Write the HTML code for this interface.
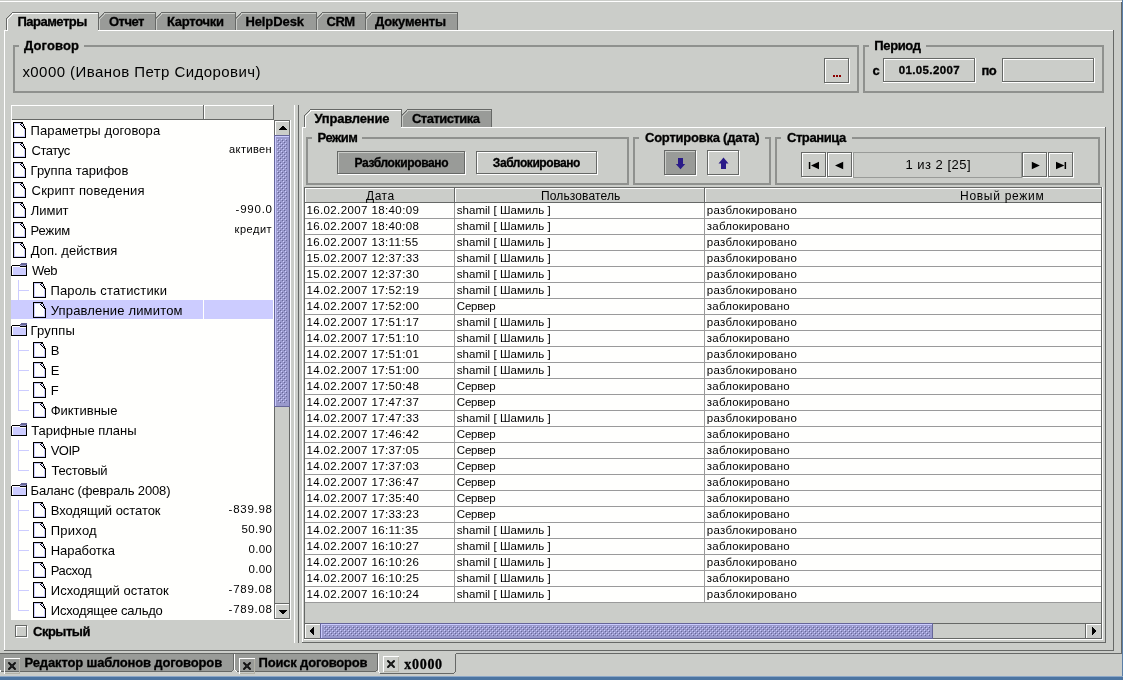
<!DOCTYPE html>
<html><head><meta charset="utf-8"><title>x0000</title>
<style>
html,body{margin:0;padding:0;background:#cbcdc9;overflow:hidden}
#w{will-change:transform;position:relative;width:1123px;height:680px;background:#cbcdc9;overflow:hidden;font-family:"Liberation Sans",sans-serif;color:#000}
#g{position:absolute;left:0;top:0}
.t{position:absolute;white-space:pre;font-family:"Liberation Sans",sans-serif}
</style></head><body><div id="w">
<svg id="g" width="1123" height="680" viewBox="0 0 1123 680" shape-rendering="crispEdges">
<defs><pattern id="bm" x="0" y="0" width="4" height="4" patternUnits="userSpaceOnUse">
<rect x="0" y="2" width="1" height="1" fill="#ccccff"/><rect x="1" y="3" width="1" height="1" fill="#666699"/>
<rect x="2" y="0" width="1" height="1" fill="#ccccff"/><rect x="3" y="1" width="1" height="1" fill="#666699"/></pattern>
<pattern id="bmv" x="0" y="0" width="4" height="4" patternUnits="userSpaceOnUse">
<rect x="1" y="3" width="1" height="1" fill="#ccccff"/><rect x="2" y="0" width="1" height="1" fill="#666699"/>
<rect x="3" y="1" width="1" height="1" fill="#ccccff"/><rect x="0" y="2" width="1" height="1" fill="#666699"/></pattern></defs>
<rect x="0" y="1" width="1122" height="1" fill="#ffffff"/>
<rect x="1121" y="2" width="1" height="652" fill="#666866"/>
<rect x="1122" y="0" width="1" height="680" fill="#5a7fa8"/>
<rect x="0" y="653" width="1122" height="1" fill="#666866"/>
<rect x="0" y="676" width="1123" height="1" fill="#8ba6c6"/>
<rect x="0" y="677" width="1123" height="3" fill="#4c74a1"/>
<rect x="4" y="30" width="1109" height="1" fill="#ffffff"/>
<rect x="4" y="30" width="1" height="621" fill="#ffffff"/>
<rect x="1113" y="30" width="1" height="621" fill="#666866"/>
<rect x="4" y="650" width="1110" height="1" fill="#666866"/>
<polygon points="365,30 365,18 371,12 458,12 458,30" fill="#999b98"/>
<rect x="365" y="18" width="1" height="12" fill="#666866"/>
<rect x="366" y="17" width="1" height="1" fill="#666866"/>
<rect x="367" y="16" width="1" height="1" fill="#666866"/>
<rect x="368" y="15" width="1" height="1" fill="#666866"/>
<rect x="369" y="14" width="1" height="1" fill="#666866"/>
<rect x="370" y="13" width="1" height="1" fill="#666866"/>
<rect x="371" y="12" width="87" height="1" fill="#666866"/>
<rect x="457" y="12" width="1" height="18" fill="#666866"/>
<rect x="366" y="19" width="1" height="11" fill="#cbcdc9"/>
<rect x="367" y="18" width="1" height="1" fill="#cbcdc9"/>
<rect x="368" y="17" width="1" height="1" fill="#cbcdc9"/>
<rect x="369" y="16" width="1" height="1" fill="#cbcdc9"/>
<rect x="370" y="15" width="1" height="1" fill="#cbcdc9"/>
<rect x="371" y="14" width="1" height="1" fill="#cbcdc9"/>
<rect x="371" y="13" width="86" height="1" fill="#cbcdc9"/>
<polygon points="316,30 316,18 322,12 366,12 366,30" fill="#999b98"/>
<rect x="316" y="18" width="1" height="12" fill="#666866"/>
<rect x="317" y="17" width="1" height="1" fill="#666866"/>
<rect x="318" y="16" width="1" height="1" fill="#666866"/>
<rect x="319" y="15" width="1" height="1" fill="#666866"/>
<rect x="320" y="14" width="1" height="1" fill="#666866"/>
<rect x="321" y="13" width="1" height="1" fill="#666866"/>
<rect x="322" y="12" width="44" height="1" fill="#666866"/>
<rect x="365" y="12" width="1" height="18" fill="#666866"/>
<rect x="317" y="19" width="1" height="11" fill="#cbcdc9"/>
<rect x="318" y="18" width="1" height="1" fill="#cbcdc9"/>
<rect x="319" y="17" width="1" height="1" fill="#cbcdc9"/>
<rect x="320" y="16" width="1" height="1" fill="#cbcdc9"/>
<rect x="321" y="15" width="1" height="1" fill="#cbcdc9"/>
<rect x="322" y="14" width="1" height="1" fill="#cbcdc9"/>
<rect x="322" y="13" width="43" height="1" fill="#cbcdc9"/>
<polygon points="235,30 235,18 241,12 317,12 317,30" fill="#999b98"/>
<rect x="235" y="18" width="1" height="12" fill="#666866"/>
<rect x="236" y="17" width="1" height="1" fill="#666866"/>
<rect x="237" y="16" width="1" height="1" fill="#666866"/>
<rect x="238" y="15" width="1" height="1" fill="#666866"/>
<rect x="239" y="14" width="1" height="1" fill="#666866"/>
<rect x="240" y="13" width="1" height="1" fill="#666866"/>
<rect x="241" y="12" width="76" height="1" fill="#666866"/>
<rect x="316" y="12" width="1" height="18" fill="#666866"/>
<rect x="236" y="19" width="1" height="11" fill="#cbcdc9"/>
<rect x="237" y="18" width="1" height="1" fill="#cbcdc9"/>
<rect x="238" y="17" width="1" height="1" fill="#cbcdc9"/>
<rect x="239" y="16" width="1" height="1" fill="#cbcdc9"/>
<rect x="240" y="15" width="1" height="1" fill="#cbcdc9"/>
<rect x="241" y="14" width="1" height="1" fill="#cbcdc9"/>
<rect x="241" y="13" width="75" height="1" fill="#cbcdc9"/>
<polygon points="155,30 155,18 161,12 236,12 236,30" fill="#999b98"/>
<rect x="155" y="18" width="1" height="12" fill="#666866"/>
<rect x="156" y="17" width="1" height="1" fill="#666866"/>
<rect x="157" y="16" width="1" height="1" fill="#666866"/>
<rect x="158" y="15" width="1" height="1" fill="#666866"/>
<rect x="159" y="14" width="1" height="1" fill="#666866"/>
<rect x="160" y="13" width="1" height="1" fill="#666866"/>
<rect x="161" y="12" width="75" height="1" fill="#666866"/>
<rect x="235" y="12" width="1" height="18" fill="#666866"/>
<rect x="156" y="19" width="1" height="11" fill="#cbcdc9"/>
<rect x="157" y="18" width="1" height="1" fill="#cbcdc9"/>
<rect x="158" y="17" width="1" height="1" fill="#cbcdc9"/>
<rect x="159" y="16" width="1" height="1" fill="#cbcdc9"/>
<rect x="160" y="15" width="1" height="1" fill="#cbcdc9"/>
<rect x="161" y="14" width="1" height="1" fill="#cbcdc9"/>
<rect x="161" y="13" width="74" height="1" fill="#cbcdc9"/>
<polygon points="98,30 98,18 104,12 156,12 156,30" fill="#999b98"/>
<rect x="98" y="18" width="1" height="12" fill="#666866"/>
<rect x="99" y="17" width="1" height="1" fill="#666866"/>
<rect x="100" y="16" width="1" height="1" fill="#666866"/>
<rect x="101" y="15" width="1" height="1" fill="#666866"/>
<rect x="102" y="14" width="1" height="1" fill="#666866"/>
<rect x="103" y="13" width="1" height="1" fill="#666866"/>
<rect x="104" y="12" width="52" height="1" fill="#666866"/>
<rect x="155" y="12" width="1" height="18" fill="#666866"/>
<rect x="99" y="19" width="1" height="11" fill="#cbcdc9"/>
<rect x="100" y="18" width="1" height="1" fill="#cbcdc9"/>
<rect x="101" y="17" width="1" height="1" fill="#cbcdc9"/>
<rect x="102" y="16" width="1" height="1" fill="#cbcdc9"/>
<rect x="103" y="15" width="1" height="1" fill="#cbcdc9"/>
<rect x="104" y="14" width="1" height="1" fill="#cbcdc9"/>
<rect x="104" y="13" width="51" height="1" fill="#cbcdc9"/>
<polygon points="6,30 6,18 12,12 99,12 99,30" fill="#cbcdc9"/>
<rect x="6" y="18" width="1" height="12" fill="#666866"/>
<rect x="7" y="17" width="1" height="1" fill="#666866"/>
<rect x="8" y="16" width="1" height="1" fill="#666866"/>
<rect x="9" y="15" width="1" height="1" fill="#666866"/>
<rect x="10" y="14" width="1" height="1" fill="#666866"/>
<rect x="11" y="13" width="1" height="1" fill="#666866"/>
<rect x="12" y="12" width="87" height="1" fill="#666866"/>
<rect x="98" y="12" width="1" height="18" fill="#666866"/>
<rect x="7" y="19" width="1" height="11" fill="#ffffff"/>
<rect x="8" y="18" width="1" height="1" fill="#ffffff"/>
<rect x="9" y="17" width="1" height="1" fill="#ffffff"/>
<rect x="10" y="16" width="1" height="1" fill="#ffffff"/>
<rect x="11" y="15" width="1" height="1" fill="#ffffff"/>
<rect x="12" y="14" width="1" height="1" fill="#ffffff"/>
<rect x="12" y="13" width="86" height="1" fill="#ffffff"/>
<rect x="8" y="30" width="90" height="1" fill="#cbcdc9"/>
<rect x="7" y="30" width="1" height="1" fill="#ffffff"/>
<rect x="13" y="45" width="6" height="2" fill="#8f918e"/>
<rect x="84" y="45" width="775" height="2" fill="#8f918e"/>
<rect x="13" y="91" width="846" height="2" fill="#8f918e"/>
<rect x="13" y="45" width="2" height="48" fill="#8f918e"/>
<rect x="857" y="45" width="2" height="48" fill="#8f918e"/>
<rect x="863" y="45" width="6" height="2" fill="#8f918e"/>
<rect x="926" y="45" width="178" height="2" fill="#8f918e"/>
<rect x="863" y="91" width="241" height="2" fill="#8f918e"/>
<rect x="863" y="45" width="2" height="48" fill="#8f918e"/>
<rect x="1102" y="45" width="2" height="48" fill="#8f918e"/>
<rect x="824" y="58" width="25" height="1" fill="#666866"/>
<rect x="824" y="58" width="1" height="25" fill="#666866"/>
<rect x="824" y="82" width="25" height="1" fill="#666866"/>
<rect x="848" y="58" width="1" height="25" fill="#666866"/>
<rect x="825" y="59" width="23" height="1" fill="#ffffff"/>
<rect x="825" y="59" width="1" height="23" fill="#ffffff"/>
<rect x="825" y="83" width="25" height="1" fill="#ffffff"/>
<rect x="849" y="59" width="1" height="25" fill="#ffffff"/>
<rect x="833" y="75" width="2" height="2" fill="#8b0000"/>
<rect x="836" y="75" width="2" height="2" fill="#8b0000"/>
<rect x="839" y="75" width="2" height="2" fill="#8b0000"/>
<rect x="883" y="58" width="92" height="1" fill="#666866"/>
<rect x="883" y="58" width="1" height="24" fill="#666866"/>
<rect x="883" y="81" width="92" height="1" fill="#666866"/>
<rect x="974" y="58" width="1" height="24" fill="#666866"/>
<rect x="884" y="59" width="90" height="1" fill="#ffffff"/>
<rect x="884" y="59" width="1" height="22" fill="#ffffff"/>
<rect x="883" y="82" width="93" height="1" fill="#ffffff"/>
<rect x="975" y="58" width="1" height="25" fill="#ffffff"/>
<rect x="1002" y="58" width="92" height="1" fill="#666866"/>
<rect x="1002" y="58" width="1" height="24" fill="#666866"/>
<rect x="1002" y="81" width="92" height="1" fill="#666866"/>
<rect x="1093" y="58" width="1" height="24" fill="#666866"/>
<rect x="1003" y="59" width="90" height="1" fill="#ffffff"/>
<rect x="1003" y="59" width="1" height="22" fill="#ffffff"/>
<rect x="1002" y="82" width="93" height="1" fill="#ffffff"/>
<rect x="1094" y="58" width="1" height="25" fill="#ffffff"/>
<rect x="11" y="105" width="263" height="15" fill="#cbcdc9"/>
<rect x="11" y="105" width="263" height="1" fill="#ffffff"/>
<rect x="11" y="119" width="263" height="1" fill="#666866"/>
<rect x="11" y="105" width="1" height="15" fill="#ffffff"/>
<rect x="203" y="105" width="1" height="15" fill="#666866"/>
<rect x="204" y="106" width="1" height="13" fill="#ffffff"/>
<rect x="273" y="105" width="1" height="15" fill="#666866"/>
<rect x="11" y="120" width="263" height="500" fill="#fffffd"/>
<rect x="15" y="124" width="9" height="12" fill="#ffffff"/>
<rect x="13" y="122" width="1" height="16" fill="#000000"/>
<rect x="13" y="122" width="10" height="1" fill="#000000"/>
<rect x="13" y="137" width="13" height="1" fill="#000000"/>
<rect x="25" y="128" width="1" height="10" fill="#000000"/>
<rect x="20" y="124" width="1" height="1" fill="#000000"/>
<rect x="21" y="125" width="1" height="1" fill="#000000"/>
<rect x="22" y="126" width="1" height="1" fill="#000000"/>
<rect x="23" y="127" width="1" height="1" fill="#000000"/>
<rect x="24" y="128" width="1" height="1" fill="#000000"/>
<rect x="21" y="123" width="2" height="1" fill="#000000"/>
<rect x="23" y="124" width="1" height="2" fill="#000000"/>
<rect x="24" y="126" width="1" height="2" fill="#000000"/>
<rect x="14" y="123" width="1" height="14" fill="#ccccff"/>
<rect x="14" y="123" width="7" height="1" fill="#ccccff"/>
<rect x="24" y="129" width="1" height="8" fill="#ccccff"/>
<rect x="21" y="124" width="1" height="1" fill="#ccccff"/>
<rect x="22" y="125" width="1" height="1" fill="#ccccff"/>
<rect x="23" y="126" width="1" height="1" fill="#ccccff"/>
<rect x="14" y="136" width="11" height="1" fill="#ccccff"/>
<rect x="15" y="144" width="9" height="12" fill="#ffffff"/>
<rect x="13" y="142" width="1" height="16" fill="#000000"/>
<rect x="13" y="142" width="10" height="1" fill="#000000"/>
<rect x="13" y="157" width="13" height="1" fill="#000000"/>
<rect x="25" y="148" width="1" height="10" fill="#000000"/>
<rect x="20" y="144" width="1" height="1" fill="#000000"/>
<rect x="21" y="145" width="1" height="1" fill="#000000"/>
<rect x="22" y="146" width="1" height="1" fill="#000000"/>
<rect x="23" y="147" width="1" height="1" fill="#000000"/>
<rect x="24" y="148" width="1" height="1" fill="#000000"/>
<rect x="21" y="143" width="2" height="1" fill="#000000"/>
<rect x="23" y="144" width="1" height="2" fill="#000000"/>
<rect x="24" y="146" width="1" height="2" fill="#000000"/>
<rect x="14" y="143" width="1" height="14" fill="#ccccff"/>
<rect x="14" y="143" width="7" height="1" fill="#ccccff"/>
<rect x="24" y="149" width="1" height="8" fill="#ccccff"/>
<rect x="21" y="144" width="1" height="1" fill="#ccccff"/>
<rect x="22" y="145" width="1" height="1" fill="#ccccff"/>
<rect x="23" y="146" width="1" height="1" fill="#ccccff"/>
<rect x="14" y="156" width="11" height="1" fill="#ccccff"/>
<rect x="15" y="164" width="9" height="12" fill="#ffffff"/>
<rect x="13" y="162" width="1" height="16" fill="#000000"/>
<rect x="13" y="162" width="10" height="1" fill="#000000"/>
<rect x="13" y="177" width="13" height="1" fill="#000000"/>
<rect x="25" y="168" width="1" height="10" fill="#000000"/>
<rect x="20" y="164" width="1" height="1" fill="#000000"/>
<rect x="21" y="165" width="1" height="1" fill="#000000"/>
<rect x="22" y="166" width="1" height="1" fill="#000000"/>
<rect x="23" y="167" width="1" height="1" fill="#000000"/>
<rect x="24" y="168" width="1" height="1" fill="#000000"/>
<rect x="21" y="163" width="2" height="1" fill="#000000"/>
<rect x="23" y="164" width="1" height="2" fill="#000000"/>
<rect x="24" y="166" width="1" height="2" fill="#000000"/>
<rect x="14" y="163" width="1" height="14" fill="#ccccff"/>
<rect x="14" y="163" width="7" height="1" fill="#ccccff"/>
<rect x="24" y="169" width="1" height="8" fill="#ccccff"/>
<rect x="21" y="164" width="1" height="1" fill="#ccccff"/>
<rect x="22" y="165" width="1" height="1" fill="#ccccff"/>
<rect x="23" y="166" width="1" height="1" fill="#ccccff"/>
<rect x="14" y="176" width="11" height="1" fill="#ccccff"/>
<rect x="15" y="184" width="9" height="12" fill="#ffffff"/>
<rect x="13" y="182" width="1" height="16" fill="#000000"/>
<rect x="13" y="182" width="10" height="1" fill="#000000"/>
<rect x="13" y="197" width="13" height="1" fill="#000000"/>
<rect x="25" y="188" width="1" height="10" fill="#000000"/>
<rect x="20" y="184" width="1" height="1" fill="#000000"/>
<rect x="21" y="185" width="1" height="1" fill="#000000"/>
<rect x="22" y="186" width="1" height="1" fill="#000000"/>
<rect x="23" y="187" width="1" height="1" fill="#000000"/>
<rect x="24" y="188" width="1" height="1" fill="#000000"/>
<rect x="21" y="183" width="2" height="1" fill="#000000"/>
<rect x="23" y="184" width="1" height="2" fill="#000000"/>
<rect x="24" y="186" width="1" height="2" fill="#000000"/>
<rect x="14" y="183" width="1" height="14" fill="#ccccff"/>
<rect x="14" y="183" width="7" height="1" fill="#ccccff"/>
<rect x="24" y="189" width="1" height="8" fill="#ccccff"/>
<rect x="21" y="184" width="1" height="1" fill="#ccccff"/>
<rect x="22" y="185" width="1" height="1" fill="#ccccff"/>
<rect x="23" y="186" width="1" height="1" fill="#ccccff"/>
<rect x="14" y="196" width="11" height="1" fill="#ccccff"/>
<rect x="15" y="204" width="9" height="12" fill="#ffffff"/>
<rect x="13" y="202" width="1" height="16" fill="#000000"/>
<rect x="13" y="202" width="10" height="1" fill="#000000"/>
<rect x="13" y="217" width="13" height="1" fill="#000000"/>
<rect x="25" y="208" width="1" height="10" fill="#000000"/>
<rect x="20" y="204" width="1" height="1" fill="#000000"/>
<rect x="21" y="205" width="1" height="1" fill="#000000"/>
<rect x="22" y="206" width="1" height="1" fill="#000000"/>
<rect x="23" y="207" width="1" height="1" fill="#000000"/>
<rect x="24" y="208" width="1" height="1" fill="#000000"/>
<rect x="21" y="203" width="2" height="1" fill="#000000"/>
<rect x="23" y="204" width="1" height="2" fill="#000000"/>
<rect x="24" y="206" width="1" height="2" fill="#000000"/>
<rect x="14" y="203" width="1" height="14" fill="#ccccff"/>
<rect x="14" y="203" width="7" height="1" fill="#ccccff"/>
<rect x="24" y="209" width="1" height="8" fill="#ccccff"/>
<rect x="21" y="204" width="1" height="1" fill="#ccccff"/>
<rect x="22" y="205" width="1" height="1" fill="#ccccff"/>
<rect x="23" y="206" width="1" height="1" fill="#ccccff"/>
<rect x="14" y="216" width="11" height="1" fill="#ccccff"/>
<rect x="15" y="224" width="9" height="12" fill="#ffffff"/>
<rect x="13" y="222" width="1" height="16" fill="#000000"/>
<rect x="13" y="222" width="10" height="1" fill="#000000"/>
<rect x="13" y="237" width="13" height="1" fill="#000000"/>
<rect x="25" y="228" width="1" height="10" fill="#000000"/>
<rect x="20" y="224" width="1" height="1" fill="#000000"/>
<rect x="21" y="225" width="1" height="1" fill="#000000"/>
<rect x="22" y="226" width="1" height="1" fill="#000000"/>
<rect x="23" y="227" width="1" height="1" fill="#000000"/>
<rect x="24" y="228" width="1" height="1" fill="#000000"/>
<rect x="21" y="223" width="2" height="1" fill="#000000"/>
<rect x="23" y="224" width="1" height="2" fill="#000000"/>
<rect x="24" y="226" width="1" height="2" fill="#000000"/>
<rect x="14" y="223" width="1" height="14" fill="#ccccff"/>
<rect x="14" y="223" width="7" height="1" fill="#ccccff"/>
<rect x="24" y="229" width="1" height="8" fill="#ccccff"/>
<rect x="21" y="224" width="1" height="1" fill="#ccccff"/>
<rect x="22" y="225" width="1" height="1" fill="#ccccff"/>
<rect x="23" y="226" width="1" height="1" fill="#ccccff"/>
<rect x="14" y="236" width="11" height="1" fill="#ccccff"/>
<rect x="15" y="244" width="9" height="12" fill="#ffffff"/>
<rect x="13" y="242" width="1" height="16" fill="#000000"/>
<rect x="13" y="242" width="10" height="1" fill="#000000"/>
<rect x="13" y="257" width="13" height="1" fill="#000000"/>
<rect x="25" y="248" width="1" height="10" fill="#000000"/>
<rect x="20" y="244" width="1" height="1" fill="#000000"/>
<rect x="21" y="245" width="1" height="1" fill="#000000"/>
<rect x="22" y="246" width="1" height="1" fill="#000000"/>
<rect x="23" y="247" width="1" height="1" fill="#000000"/>
<rect x="24" y="248" width="1" height="1" fill="#000000"/>
<rect x="21" y="243" width="2" height="1" fill="#000000"/>
<rect x="23" y="244" width="1" height="2" fill="#000000"/>
<rect x="24" y="246" width="1" height="2" fill="#000000"/>
<rect x="14" y="243" width="1" height="14" fill="#ccccff"/>
<rect x="14" y="243" width="7" height="1" fill="#ccccff"/>
<rect x="24" y="249" width="1" height="8" fill="#ccccff"/>
<rect x="21" y="244" width="1" height="1" fill="#ccccff"/>
<rect x="22" y="245" width="1" height="1" fill="#ccccff"/>
<rect x="23" y="246" width="1" height="1" fill="#ccccff"/>
<rect x="14" y="256" width="11" height="1" fill="#ccccff"/>
<rect x="21" y="263" width="6" height="1" fill="#666699"/>
<rect x="20" y="264" width="7" height="1" fill="#666699"/>
<rect x="13" y="267" width="13" height="8" fill="#ccccff"/>
<rect x="20" y="265" width="6" height="1" fill="#9999cc"/>
<rect x="11" y="266" width="1" height="10" fill="#000000"/>
<rect x="12" y="265" width="8" height="1" fill="#000000"/>
<rect x="20" y="266" width="6" height="1" fill="#000000"/>
<rect x="26" y="265" width="1" height="11" fill="#000000"/>
<rect x="11" y="275" width="16" height="1" fill="#000000"/>
<rect x="12" y="266" width="1" height="9" fill="#ffffff"/>
<rect x="12" y="266" width="8" height="1" fill="#ffffff"/>
<rect x="20" y="267" width="6" height="1" fill="#ffffff"/>
<rect x="18" y="280" width="1" height="20" fill="#ccccff"/>
<rect x="18" y="290" width="11" height="1" fill="#ccccff"/>
<rect x="35" y="284" width="9" height="12" fill="#ffffff"/>
<rect x="33" y="282" width="1" height="16" fill="#000000"/>
<rect x="33" y="282" width="10" height="1" fill="#000000"/>
<rect x="33" y="297" width="13" height="1" fill="#000000"/>
<rect x="45" y="288" width="1" height="10" fill="#000000"/>
<rect x="40" y="284" width="1" height="1" fill="#000000"/>
<rect x="41" y="285" width="1" height="1" fill="#000000"/>
<rect x="42" y="286" width="1" height="1" fill="#000000"/>
<rect x="43" y="287" width="1" height="1" fill="#000000"/>
<rect x="44" y="288" width="1" height="1" fill="#000000"/>
<rect x="41" y="283" width="2" height="1" fill="#000000"/>
<rect x="43" y="284" width="1" height="2" fill="#000000"/>
<rect x="44" y="286" width="1" height="2" fill="#000000"/>
<rect x="34" y="283" width="1" height="14" fill="#ccccff"/>
<rect x="34" y="283" width="7" height="1" fill="#ccccff"/>
<rect x="44" y="289" width="1" height="8" fill="#ccccff"/>
<rect x="41" y="284" width="1" height="1" fill="#ccccff"/>
<rect x="42" y="285" width="1" height="1" fill="#ccccff"/>
<rect x="43" y="286" width="1" height="1" fill="#ccccff"/>
<rect x="34" y="296" width="11" height="1" fill="#ccccff"/>
<rect x="11" y="300" width="192" height="19" fill="#ccccff"/>
<rect x="204" y="300" width="69" height="19" fill="#ccccff"/>
<rect x="35" y="304" width="9" height="12" fill="#ffffff"/>
<rect x="33" y="302" width="1" height="16" fill="#000000"/>
<rect x="33" y="302" width="10" height="1" fill="#000000"/>
<rect x="33" y="317" width="13" height="1" fill="#000000"/>
<rect x="45" y="308" width="1" height="10" fill="#000000"/>
<rect x="40" y="304" width="1" height="1" fill="#000000"/>
<rect x="41" y="305" width="1" height="1" fill="#000000"/>
<rect x="42" y="306" width="1" height="1" fill="#000000"/>
<rect x="43" y="307" width="1" height="1" fill="#000000"/>
<rect x="44" y="308" width="1" height="1" fill="#000000"/>
<rect x="41" y="303" width="2" height="1" fill="#000000"/>
<rect x="43" y="304" width="1" height="2" fill="#000000"/>
<rect x="44" y="306" width="1" height="2" fill="#000000"/>
<rect x="34" y="303" width="1" height="14" fill="#ccccff"/>
<rect x="34" y="303" width="7" height="1" fill="#ccccff"/>
<rect x="44" y="309" width="1" height="8" fill="#ccccff"/>
<rect x="41" y="304" width="1" height="1" fill="#ccccff"/>
<rect x="42" y="305" width="1" height="1" fill="#ccccff"/>
<rect x="43" y="306" width="1" height="1" fill="#ccccff"/>
<rect x="34" y="316" width="11" height="1" fill="#ccccff"/>
<rect x="21" y="323" width="6" height="1" fill="#666699"/>
<rect x="20" y="324" width="7" height="1" fill="#666699"/>
<rect x="13" y="327" width="13" height="8" fill="#ccccff"/>
<rect x="20" y="325" width="6" height="1" fill="#9999cc"/>
<rect x="11" y="326" width="1" height="10" fill="#000000"/>
<rect x="12" y="325" width="8" height="1" fill="#000000"/>
<rect x="20" y="326" width="6" height="1" fill="#000000"/>
<rect x="26" y="325" width="1" height="11" fill="#000000"/>
<rect x="11" y="335" width="16" height="1" fill="#000000"/>
<rect x="12" y="326" width="1" height="9" fill="#ffffff"/>
<rect x="12" y="326" width="8" height="1" fill="#ffffff"/>
<rect x="20" y="327" width="6" height="1" fill="#ffffff"/>
<rect x="18" y="340" width="1" height="20" fill="#ccccff"/>
<rect x="18" y="350" width="11" height="1" fill="#ccccff"/>
<rect x="35" y="344" width="9" height="12" fill="#ffffff"/>
<rect x="33" y="342" width="1" height="16" fill="#000000"/>
<rect x="33" y="342" width="10" height="1" fill="#000000"/>
<rect x="33" y="357" width="13" height="1" fill="#000000"/>
<rect x="45" y="348" width="1" height="10" fill="#000000"/>
<rect x="40" y="344" width="1" height="1" fill="#000000"/>
<rect x="41" y="345" width="1" height="1" fill="#000000"/>
<rect x="42" y="346" width="1" height="1" fill="#000000"/>
<rect x="43" y="347" width="1" height="1" fill="#000000"/>
<rect x="44" y="348" width="1" height="1" fill="#000000"/>
<rect x="41" y="343" width="2" height="1" fill="#000000"/>
<rect x="43" y="344" width="1" height="2" fill="#000000"/>
<rect x="44" y="346" width="1" height="2" fill="#000000"/>
<rect x="34" y="343" width="1" height="14" fill="#ccccff"/>
<rect x="34" y="343" width="7" height="1" fill="#ccccff"/>
<rect x="44" y="349" width="1" height="8" fill="#ccccff"/>
<rect x="41" y="344" width="1" height="1" fill="#ccccff"/>
<rect x="42" y="345" width="1" height="1" fill="#ccccff"/>
<rect x="43" y="346" width="1" height="1" fill="#ccccff"/>
<rect x="34" y="356" width="11" height="1" fill="#ccccff"/>
<rect x="18" y="360" width="1" height="20" fill="#ccccff"/>
<rect x="18" y="370" width="11" height="1" fill="#ccccff"/>
<rect x="35" y="364" width="9" height="12" fill="#ffffff"/>
<rect x="33" y="362" width="1" height="16" fill="#000000"/>
<rect x="33" y="362" width="10" height="1" fill="#000000"/>
<rect x="33" y="377" width="13" height="1" fill="#000000"/>
<rect x="45" y="368" width="1" height="10" fill="#000000"/>
<rect x="40" y="364" width="1" height="1" fill="#000000"/>
<rect x="41" y="365" width="1" height="1" fill="#000000"/>
<rect x="42" y="366" width="1" height="1" fill="#000000"/>
<rect x="43" y="367" width="1" height="1" fill="#000000"/>
<rect x="44" y="368" width="1" height="1" fill="#000000"/>
<rect x="41" y="363" width="2" height="1" fill="#000000"/>
<rect x="43" y="364" width="1" height="2" fill="#000000"/>
<rect x="44" y="366" width="1" height="2" fill="#000000"/>
<rect x="34" y="363" width="1" height="14" fill="#ccccff"/>
<rect x="34" y="363" width="7" height="1" fill="#ccccff"/>
<rect x="44" y="369" width="1" height="8" fill="#ccccff"/>
<rect x="41" y="364" width="1" height="1" fill="#ccccff"/>
<rect x="42" y="365" width="1" height="1" fill="#ccccff"/>
<rect x="43" y="366" width="1" height="1" fill="#ccccff"/>
<rect x="34" y="376" width="11" height="1" fill="#ccccff"/>
<rect x="18" y="380" width="1" height="20" fill="#ccccff"/>
<rect x="18" y="390" width="11" height="1" fill="#ccccff"/>
<rect x="35" y="384" width="9" height="12" fill="#ffffff"/>
<rect x="33" y="382" width="1" height="16" fill="#000000"/>
<rect x="33" y="382" width="10" height="1" fill="#000000"/>
<rect x="33" y="397" width="13" height="1" fill="#000000"/>
<rect x="45" y="388" width="1" height="10" fill="#000000"/>
<rect x="40" y="384" width="1" height="1" fill="#000000"/>
<rect x="41" y="385" width="1" height="1" fill="#000000"/>
<rect x="42" y="386" width="1" height="1" fill="#000000"/>
<rect x="43" y="387" width="1" height="1" fill="#000000"/>
<rect x="44" y="388" width="1" height="1" fill="#000000"/>
<rect x="41" y="383" width="2" height="1" fill="#000000"/>
<rect x="43" y="384" width="1" height="2" fill="#000000"/>
<rect x="44" y="386" width="1" height="2" fill="#000000"/>
<rect x="34" y="383" width="1" height="14" fill="#ccccff"/>
<rect x="34" y="383" width="7" height="1" fill="#ccccff"/>
<rect x="44" y="389" width="1" height="8" fill="#ccccff"/>
<rect x="41" y="384" width="1" height="1" fill="#ccccff"/>
<rect x="42" y="385" width="1" height="1" fill="#ccccff"/>
<rect x="43" y="386" width="1" height="1" fill="#ccccff"/>
<rect x="34" y="396" width="11" height="1" fill="#ccccff"/>
<rect x="18" y="400" width="1" height="11" fill="#ccccff"/>
<rect x="18" y="410" width="11" height="1" fill="#ccccff"/>
<rect x="35" y="404" width="9" height="12" fill="#ffffff"/>
<rect x="33" y="402" width="1" height="16" fill="#000000"/>
<rect x="33" y="402" width="10" height="1" fill="#000000"/>
<rect x="33" y="417" width="13" height="1" fill="#000000"/>
<rect x="45" y="408" width="1" height="10" fill="#000000"/>
<rect x="40" y="404" width="1" height="1" fill="#000000"/>
<rect x="41" y="405" width="1" height="1" fill="#000000"/>
<rect x="42" y="406" width="1" height="1" fill="#000000"/>
<rect x="43" y="407" width="1" height="1" fill="#000000"/>
<rect x="44" y="408" width="1" height="1" fill="#000000"/>
<rect x="41" y="403" width="2" height="1" fill="#000000"/>
<rect x="43" y="404" width="1" height="2" fill="#000000"/>
<rect x="44" y="406" width="1" height="2" fill="#000000"/>
<rect x="34" y="403" width="1" height="14" fill="#ccccff"/>
<rect x="34" y="403" width="7" height="1" fill="#ccccff"/>
<rect x="44" y="409" width="1" height="8" fill="#ccccff"/>
<rect x="41" y="404" width="1" height="1" fill="#ccccff"/>
<rect x="42" y="405" width="1" height="1" fill="#ccccff"/>
<rect x="43" y="406" width="1" height="1" fill="#ccccff"/>
<rect x="34" y="416" width="11" height="1" fill="#ccccff"/>
<rect x="21" y="423" width="6" height="1" fill="#666699"/>
<rect x="20" y="424" width="7" height="1" fill="#666699"/>
<rect x="13" y="427" width="13" height="8" fill="#ccccff"/>
<rect x="20" y="425" width="6" height="1" fill="#9999cc"/>
<rect x="11" y="426" width="1" height="10" fill="#000000"/>
<rect x="12" y="425" width="8" height="1" fill="#000000"/>
<rect x="20" y="426" width="6" height="1" fill="#000000"/>
<rect x="26" y="425" width="1" height="11" fill="#000000"/>
<rect x="11" y="435" width="16" height="1" fill="#000000"/>
<rect x="12" y="426" width="1" height="9" fill="#ffffff"/>
<rect x="12" y="426" width="8" height="1" fill="#ffffff"/>
<rect x="20" y="427" width="6" height="1" fill="#ffffff"/>
<rect x="18" y="440" width="1" height="20" fill="#ccccff"/>
<rect x="18" y="450" width="11" height="1" fill="#ccccff"/>
<rect x="35" y="444" width="9" height="12" fill="#ffffff"/>
<rect x="33" y="442" width="1" height="16" fill="#000000"/>
<rect x="33" y="442" width="10" height="1" fill="#000000"/>
<rect x="33" y="457" width="13" height="1" fill="#000000"/>
<rect x="45" y="448" width="1" height="10" fill="#000000"/>
<rect x="40" y="444" width="1" height="1" fill="#000000"/>
<rect x="41" y="445" width="1" height="1" fill="#000000"/>
<rect x="42" y="446" width="1" height="1" fill="#000000"/>
<rect x="43" y="447" width="1" height="1" fill="#000000"/>
<rect x="44" y="448" width="1" height="1" fill="#000000"/>
<rect x="41" y="443" width="2" height="1" fill="#000000"/>
<rect x="43" y="444" width="1" height="2" fill="#000000"/>
<rect x="44" y="446" width="1" height="2" fill="#000000"/>
<rect x="34" y="443" width="1" height="14" fill="#ccccff"/>
<rect x="34" y="443" width="7" height="1" fill="#ccccff"/>
<rect x="44" y="449" width="1" height="8" fill="#ccccff"/>
<rect x="41" y="444" width="1" height="1" fill="#ccccff"/>
<rect x="42" y="445" width="1" height="1" fill="#ccccff"/>
<rect x="43" y="446" width="1" height="1" fill="#ccccff"/>
<rect x="34" y="456" width="11" height="1" fill="#ccccff"/>
<rect x="18" y="460" width="1" height="11" fill="#ccccff"/>
<rect x="18" y="470" width="11" height="1" fill="#ccccff"/>
<rect x="35" y="464" width="9" height="12" fill="#ffffff"/>
<rect x="33" y="462" width="1" height="16" fill="#000000"/>
<rect x="33" y="462" width="10" height="1" fill="#000000"/>
<rect x="33" y="477" width="13" height="1" fill="#000000"/>
<rect x="45" y="468" width="1" height="10" fill="#000000"/>
<rect x="40" y="464" width="1" height="1" fill="#000000"/>
<rect x="41" y="465" width="1" height="1" fill="#000000"/>
<rect x="42" y="466" width="1" height="1" fill="#000000"/>
<rect x="43" y="467" width="1" height="1" fill="#000000"/>
<rect x="44" y="468" width="1" height="1" fill="#000000"/>
<rect x="41" y="463" width="2" height="1" fill="#000000"/>
<rect x="43" y="464" width="1" height="2" fill="#000000"/>
<rect x="44" y="466" width="1" height="2" fill="#000000"/>
<rect x="34" y="463" width="1" height="14" fill="#ccccff"/>
<rect x="34" y="463" width="7" height="1" fill="#ccccff"/>
<rect x="44" y="469" width="1" height="8" fill="#ccccff"/>
<rect x="41" y="464" width="1" height="1" fill="#ccccff"/>
<rect x="42" y="465" width="1" height="1" fill="#ccccff"/>
<rect x="43" y="466" width="1" height="1" fill="#ccccff"/>
<rect x="34" y="476" width="11" height="1" fill="#ccccff"/>
<rect x="21" y="483" width="6" height="1" fill="#666699"/>
<rect x="20" y="484" width="7" height="1" fill="#666699"/>
<rect x="13" y="487" width="13" height="8" fill="#ccccff"/>
<rect x="20" y="485" width="6" height="1" fill="#9999cc"/>
<rect x="11" y="486" width="1" height="10" fill="#000000"/>
<rect x="12" y="485" width="8" height="1" fill="#000000"/>
<rect x="20" y="486" width="6" height="1" fill="#000000"/>
<rect x="26" y="485" width="1" height="11" fill="#000000"/>
<rect x="11" y="495" width="16" height="1" fill="#000000"/>
<rect x="12" y="486" width="1" height="9" fill="#ffffff"/>
<rect x="12" y="486" width="8" height="1" fill="#ffffff"/>
<rect x="20" y="487" width="6" height="1" fill="#ffffff"/>
<rect x="18" y="500" width="1" height="20" fill="#ccccff"/>
<rect x="18" y="510" width="11" height="1" fill="#ccccff"/>
<rect x="35" y="504" width="9" height="12" fill="#ffffff"/>
<rect x="33" y="502" width="1" height="16" fill="#000000"/>
<rect x="33" y="502" width="10" height="1" fill="#000000"/>
<rect x="33" y="517" width="13" height="1" fill="#000000"/>
<rect x="45" y="508" width="1" height="10" fill="#000000"/>
<rect x="40" y="504" width="1" height="1" fill="#000000"/>
<rect x="41" y="505" width="1" height="1" fill="#000000"/>
<rect x="42" y="506" width="1" height="1" fill="#000000"/>
<rect x="43" y="507" width="1" height="1" fill="#000000"/>
<rect x="44" y="508" width="1" height="1" fill="#000000"/>
<rect x="41" y="503" width="2" height="1" fill="#000000"/>
<rect x="43" y="504" width="1" height="2" fill="#000000"/>
<rect x="44" y="506" width="1" height="2" fill="#000000"/>
<rect x="34" y="503" width="1" height="14" fill="#ccccff"/>
<rect x="34" y="503" width="7" height="1" fill="#ccccff"/>
<rect x="44" y="509" width="1" height="8" fill="#ccccff"/>
<rect x="41" y="504" width="1" height="1" fill="#ccccff"/>
<rect x="42" y="505" width="1" height="1" fill="#ccccff"/>
<rect x="43" y="506" width="1" height="1" fill="#ccccff"/>
<rect x="34" y="516" width="11" height="1" fill="#ccccff"/>
<rect x="18" y="520" width="1" height="20" fill="#ccccff"/>
<rect x="18" y="530" width="11" height="1" fill="#ccccff"/>
<rect x="35" y="524" width="9" height="12" fill="#ffffff"/>
<rect x="33" y="522" width="1" height="16" fill="#000000"/>
<rect x="33" y="522" width="10" height="1" fill="#000000"/>
<rect x="33" y="537" width="13" height="1" fill="#000000"/>
<rect x="45" y="528" width="1" height="10" fill="#000000"/>
<rect x="40" y="524" width="1" height="1" fill="#000000"/>
<rect x="41" y="525" width="1" height="1" fill="#000000"/>
<rect x="42" y="526" width="1" height="1" fill="#000000"/>
<rect x="43" y="527" width="1" height="1" fill="#000000"/>
<rect x="44" y="528" width="1" height="1" fill="#000000"/>
<rect x="41" y="523" width="2" height="1" fill="#000000"/>
<rect x="43" y="524" width="1" height="2" fill="#000000"/>
<rect x="44" y="526" width="1" height="2" fill="#000000"/>
<rect x="34" y="523" width="1" height="14" fill="#ccccff"/>
<rect x="34" y="523" width="7" height="1" fill="#ccccff"/>
<rect x="44" y="529" width="1" height="8" fill="#ccccff"/>
<rect x="41" y="524" width="1" height="1" fill="#ccccff"/>
<rect x="42" y="525" width="1" height="1" fill="#ccccff"/>
<rect x="43" y="526" width="1" height="1" fill="#ccccff"/>
<rect x="34" y="536" width="11" height="1" fill="#ccccff"/>
<rect x="18" y="540" width="1" height="20" fill="#ccccff"/>
<rect x="18" y="550" width="11" height="1" fill="#ccccff"/>
<rect x="35" y="544" width="9" height="12" fill="#ffffff"/>
<rect x="33" y="542" width="1" height="16" fill="#000000"/>
<rect x="33" y="542" width="10" height="1" fill="#000000"/>
<rect x="33" y="557" width="13" height="1" fill="#000000"/>
<rect x="45" y="548" width="1" height="10" fill="#000000"/>
<rect x="40" y="544" width="1" height="1" fill="#000000"/>
<rect x="41" y="545" width="1" height="1" fill="#000000"/>
<rect x="42" y="546" width="1" height="1" fill="#000000"/>
<rect x="43" y="547" width="1" height="1" fill="#000000"/>
<rect x="44" y="548" width="1" height="1" fill="#000000"/>
<rect x="41" y="543" width="2" height="1" fill="#000000"/>
<rect x="43" y="544" width="1" height="2" fill="#000000"/>
<rect x="44" y="546" width="1" height="2" fill="#000000"/>
<rect x="34" y="543" width="1" height="14" fill="#ccccff"/>
<rect x="34" y="543" width="7" height="1" fill="#ccccff"/>
<rect x="44" y="549" width="1" height="8" fill="#ccccff"/>
<rect x="41" y="544" width="1" height="1" fill="#ccccff"/>
<rect x="42" y="545" width="1" height="1" fill="#ccccff"/>
<rect x="43" y="546" width="1" height="1" fill="#ccccff"/>
<rect x="34" y="556" width="11" height="1" fill="#ccccff"/>
<rect x="18" y="560" width="1" height="20" fill="#ccccff"/>
<rect x="18" y="570" width="11" height="1" fill="#ccccff"/>
<rect x="35" y="564" width="9" height="12" fill="#ffffff"/>
<rect x="33" y="562" width="1" height="16" fill="#000000"/>
<rect x="33" y="562" width="10" height="1" fill="#000000"/>
<rect x="33" y="577" width="13" height="1" fill="#000000"/>
<rect x="45" y="568" width="1" height="10" fill="#000000"/>
<rect x="40" y="564" width="1" height="1" fill="#000000"/>
<rect x="41" y="565" width="1" height="1" fill="#000000"/>
<rect x="42" y="566" width="1" height="1" fill="#000000"/>
<rect x="43" y="567" width="1" height="1" fill="#000000"/>
<rect x="44" y="568" width="1" height="1" fill="#000000"/>
<rect x="41" y="563" width="2" height="1" fill="#000000"/>
<rect x="43" y="564" width="1" height="2" fill="#000000"/>
<rect x="44" y="566" width="1" height="2" fill="#000000"/>
<rect x="34" y="563" width="1" height="14" fill="#ccccff"/>
<rect x="34" y="563" width="7" height="1" fill="#ccccff"/>
<rect x="44" y="569" width="1" height="8" fill="#ccccff"/>
<rect x="41" y="564" width="1" height="1" fill="#ccccff"/>
<rect x="42" y="565" width="1" height="1" fill="#ccccff"/>
<rect x="43" y="566" width="1" height="1" fill="#ccccff"/>
<rect x="34" y="576" width="11" height="1" fill="#ccccff"/>
<rect x="18" y="580" width="1" height="20" fill="#ccccff"/>
<rect x="18" y="590" width="11" height="1" fill="#ccccff"/>
<rect x="35" y="584" width="9" height="12" fill="#ffffff"/>
<rect x="33" y="582" width="1" height="16" fill="#000000"/>
<rect x="33" y="582" width="10" height="1" fill="#000000"/>
<rect x="33" y="597" width="13" height="1" fill="#000000"/>
<rect x="45" y="588" width="1" height="10" fill="#000000"/>
<rect x="40" y="584" width="1" height="1" fill="#000000"/>
<rect x="41" y="585" width="1" height="1" fill="#000000"/>
<rect x="42" y="586" width="1" height="1" fill="#000000"/>
<rect x="43" y="587" width="1" height="1" fill="#000000"/>
<rect x="44" y="588" width="1" height="1" fill="#000000"/>
<rect x="41" y="583" width="2" height="1" fill="#000000"/>
<rect x="43" y="584" width="1" height="2" fill="#000000"/>
<rect x="44" y="586" width="1" height="2" fill="#000000"/>
<rect x="34" y="583" width="1" height="14" fill="#ccccff"/>
<rect x="34" y="583" width="7" height="1" fill="#ccccff"/>
<rect x="44" y="589" width="1" height="8" fill="#ccccff"/>
<rect x="41" y="584" width="1" height="1" fill="#ccccff"/>
<rect x="42" y="585" width="1" height="1" fill="#ccccff"/>
<rect x="43" y="586" width="1" height="1" fill="#ccccff"/>
<rect x="34" y="596" width="11" height="1" fill="#ccccff"/>
<rect x="18" y="600" width="1" height="11" fill="#ccccff"/>
<rect x="18" y="610" width="11" height="1" fill="#ccccff"/>
<rect x="35" y="604" width="9" height="12" fill="#ffffff"/>
<rect x="33" y="602" width="1" height="16" fill="#000000"/>
<rect x="33" y="602" width="10" height="1" fill="#000000"/>
<rect x="33" y="617" width="13" height="1" fill="#000000"/>
<rect x="45" y="608" width="1" height="10" fill="#000000"/>
<rect x="40" y="604" width="1" height="1" fill="#000000"/>
<rect x="41" y="605" width="1" height="1" fill="#000000"/>
<rect x="42" y="606" width="1" height="1" fill="#000000"/>
<rect x="43" y="607" width="1" height="1" fill="#000000"/>
<rect x="44" y="608" width="1" height="1" fill="#000000"/>
<rect x="41" y="603" width="2" height="1" fill="#000000"/>
<rect x="43" y="604" width="1" height="2" fill="#000000"/>
<rect x="44" y="606" width="1" height="2" fill="#000000"/>
<rect x="34" y="603" width="1" height="14" fill="#ccccff"/>
<rect x="34" y="603" width="7" height="1" fill="#ccccff"/>
<rect x="44" y="609" width="1" height="8" fill="#ccccff"/>
<rect x="41" y="604" width="1" height="1" fill="#ccccff"/>
<rect x="42" y="605" width="1" height="1" fill="#ccccff"/>
<rect x="43" y="606" width="1" height="1" fill="#ccccff"/>
<rect x="34" y="616" width="11" height="1" fill="#ccccff"/>
<rect x="274" y="120" width="17" height="500" fill="#cbcdc9"/>
<rect x="274" y="120" width="1" height="500" fill="#666866"/>
<rect x="289" y="120" width="1" height="500" fill="#666866"/>
<rect x="290" y="120" width="1" height="500" fill="#ffffff"/>
<rect x="274" y="120" width="16" height="1" fill="#666866"/>
<rect x="275" y="121" width="14" height="1" fill="#ffffff"/>
<rect x="275" y="121" width="1" height="14" fill="#ffffff"/>
<rect x="274" y="135" width="16" height="1" fill="#666866"/>
<rect x="282" y="126" width="2" height="1" fill="#000000"/>
<rect x="281" y="127" width="4" height="1" fill="#000000"/>
<rect x="280" y="128" width="6" height="1" fill="#000000"/>
<rect x="279" y="129" width="8" height="1" fill="#000000"/>
<rect x="275" y="136" width="14" height="270" fill="#9999cc"/>
<rect x="274" y="135" width="16" height="1" fill="#666699"/>
<rect x="274" y="406" width="16" height="1" fill="#666699"/>
<rect x="274" y="135" width="1" height="272" fill="#666699"/>
<rect x="289" y="135" width="1" height="272" fill="#666699"/>
<rect x="275" y="136" width="1" height="270" fill="#ccccff"/>
<rect x="275" y="136" width="14" height="1" fill="#ccccff"/>
<rect x="277" y="139" width="10" height="264" fill="url(#bmv)"/>
<rect x="274" y="603" width="16" height="1" fill="#666866"/>
<rect x="275" y="604" width="14" height="1" fill="#ffffff"/>
<rect x="275" y="604" width="1" height="14" fill="#ffffff"/>
<rect x="274" y="618" width="16" height="1" fill="#666866"/>
<rect x="274" y="619" width="17" height="1" fill="#ffffff"/>
<rect x="279" y="610" width="8" height="1" fill="#000000"/>
<rect x="280" y="611" width="6" height="1" fill="#000000"/>
<rect x="281" y="612" width="4" height="1" fill="#000000"/>
<rect x="282" y="613" width="2" height="1" fill="#000000"/>
<rect x="15" y="625" width="12" height="1" fill="#666866"/>
<rect x="15" y="636" width="12" height="1" fill="#666866"/>
<rect x="15" y="625" width="1" height="12" fill="#666866"/>
<rect x="26" y="625" width="1" height="12" fill="#666866"/>
<rect x="16" y="626" width="10" height="1" fill="#ffffff"/>
<rect x="16" y="626" width="1" height="10" fill="#ffffff"/>
<rect x="16" y="637" width="12" height="1" fill="#ffffff"/>
<rect x="27" y="626" width="1" height="12" fill="#ffffff"/>
<rect x="294" y="105" width="1" height="538" fill="#ffffff"/>
<rect x="298" y="105" width="1" height="538" fill="#666866"/>
<rect x="302" y="127" width="803" height="1" fill="#ffffff"/>
<rect x="302" y="127" width="1" height="515" fill="#ffffff"/>
<rect x="1105" y="127" width="1" height="516" fill="#666866"/>
<rect x="302" y="642" width="804" height="1" fill="#666866"/>
<polygon points="401,127 401,115 407,109 492,109 492,127" fill="#999b98"/>
<rect x="401" y="115" width="1" height="12" fill="#666866"/>
<rect x="402" y="114" width="1" height="1" fill="#666866"/>
<rect x="403" y="113" width="1" height="1" fill="#666866"/>
<rect x="404" y="112" width="1" height="1" fill="#666866"/>
<rect x="405" y="111" width="1" height="1" fill="#666866"/>
<rect x="406" y="110" width="1" height="1" fill="#666866"/>
<rect x="407" y="109" width="85" height="1" fill="#666866"/>
<rect x="491" y="109" width="1" height="18" fill="#666866"/>
<rect x="402" y="116" width="1" height="11" fill="#cbcdc9"/>
<rect x="403" y="115" width="1" height="1" fill="#cbcdc9"/>
<rect x="404" y="114" width="1" height="1" fill="#cbcdc9"/>
<rect x="405" y="113" width="1" height="1" fill="#cbcdc9"/>
<rect x="406" y="112" width="1" height="1" fill="#cbcdc9"/>
<rect x="407" y="111" width="1" height="1" fill="#cbcdc9"/>
<rect x="407" y="110" width="84" height="1" fill="#cbcdc9"/>
<polygon points="304,127 304,115 310,109 402,109 402,127" fill="#cbcdc9"/>
<rect x="304" y="115" width="1" height="12" fill="#666866"/>
<rect x="305" y="114" width="1" height="1" fill="#666866"/>
<rect x="306" y="113" width="1" height="1" fill="#666866"/>
<rect x="307" y="112" width="1" height="1" fill="#666866"/>
<rect x="308" y="111" width="1" height="1" fill="#666866"/>
<rect x="309" y="110" width="1" height="1" fill="#666866"/>
<rect x="310" y="109" width="92" height="1" fill="#666866"/>
<rect x="401" y="109" width="1" height="18" fill="#666866"/>
<rect x="305" y="116" width="1" height="11" fill="#ffffff"/>
<rect x="306" y="115" width="1" height="1" fill="#ffffff"/>
<rect x="307" y="114" width="1" height="1" fill="#ffffff"/>
<rect x="308" y="113" width="1" height="1" fill="#ffffff"/>
<rect x="309" y="112" width="1" height="1" fill="#ffffff"/>
<rect x="310" y="111" width="1" height="1" fill="#ffffff"/>
<rect x="310" y="110" width="91" height="1" fill="#ffffff"/>
<rect x="306" y="127" width="95" height="1" fill="#cbcdc9"/>
<rect x="306" y="137" width="6" height="2" fill="#8f918e"/>
<rect x="362" y="137" width="267" height="2" fill="#8f918e"/>
<rect x="306" y="183" width="323" height="2" fill="#8f918e"/>
<rect x="306" y="137" width="2" height="48" fill="#8f918e"/>
<rect x="627" y="137" width="2" height="48" fill="#8f918e"/>
<rect x="633" y="137" width="6" height="2" fill="#8f918e"/>
<rect x="765" y="137" width="6" height="2" fill="#8f918e"/>
<rect x="633" y="183" width="138" height="2" fill="#8f918e"/>
<rect x="633" y="137" width="2" height="48" fill="#8f918e"/>
<rect x="769" y="137" width="2" height="48" fill="#8f918e"/>
<rect x="775" y="137" width="6" height="2" fill="#8f918e"/>
<rect x="852" y="137" width="248" height="2" fill="#8f918e"/>
<rect x="775" y="183" width="325" height="2" fill="#8f918e"/>
<rect x="775" y="137" width="2" height="48" fill="#8f918e"/>
<rect x="1098" y="137" width="2" height="48" fill="#8f918e"/>
<rect x="337" y="151" width="128" height="23" fill="#999b98"/>
<rect x="337" y="151" width="128" height="1" fill="#666866"/>
<rect x="337" y="151" width="1" height="23" fill="#666866"/>
<rect x="337" y="173" width="128" height="1" fill="#666866"/>
<rect x="464" y="151" width="1" height="23" fill="#666866"/>
<rect x="338" y="174" width="128" height="1" fill="#ffffff"/>
<rect x="465" y="152" width="1" height="23" fill="#ffffff"/>
<rect x="338" y="152" width="126" height="1" fill="#cbcdc9"/>
<rect x="338" y="152" width="1" height="21" fill="#cbcdc9"/>
<rect x="476" y="151" width="121" height="1" fill="#666866"/>
<rect x="476" y="151" width="1" height="23" fill="#666866"/>
<rect x="476" y="173" width="121" height="1" fill="#666866"/>
<rect x="596" y="151" width="1" height="23" fill="#666866"/>
<rect x="477" y="152" width="119" height="1" fill="#ffffff"/>
<rect x="477" y="152" width="1" height="21" fill="#ffffff"/>
<rect x="477" y="174" width="121" height="1" fill="#ffffff"/>
<rect x="597" y="152" width="1" height="23" fill="#ffffff"/>
<rect x="664" y="150" width="32" height="25" fill="#999b98"/>
<rect x="664" y="150" width="32" height="1" fill="#666866"/>
<rect x="664" y="150" width="1" height="25" fill="#666866"/>
<rect x="664" y="174" width="32" height="1" fill="#666866"/>
<rect x="695" y="150" width="1" height="25" fill="#666866"/>
<rect x="665" y="175" width="32" height="1" fill="#ffffff"/>
<rect x="696" y="151" width="1" height="25" fill="#ffffff"/>
<rect x="665" y="151" width="30" height="1" fill="#cbcdc9"/>
<rect x="665" y="151" width="1" height="23" fill="#cbcdc9"/>
<rect x="707" y="150" width="32" height="1" fill="#666866"/>
<rect x="707" y="150" width="1" height="25" fill="#666866"/>
<rect x="707" y="174" width="32" height="1" fill="#666866"/>
<rect x="738" y="150" width="1" height="25" fill="#666866"/>
<rect x="708" y="151" width="30" height="1" fill="#ffffff"/>
<rect x="708" y="151" width="1" height="23" fill="#ffffff"/>
<rect x="708" y="175" width="32" height="1" fill="#ffffff"/>
<rect x="739" y="151" width="1" height="25" fill="#ffffff"/>
<rect shape-rendering="geometricPrecision" x="678" y="158" width="5" height="6.5" fill="#2a1b88"/>
<polygon shape-rendering="geometricPrecision" points="675.8,164 685.2,164 680.5,169.3" fill="#2a1b88"/>
<rect shape-rendering="geometricPrecision" x="721" y="163" width="5" height="6" fill="#2a1b88"/>
<polygon shape-rendering="geometricPrecision" points="723.5,157.4 718.5,163.4 728.5,163.4" fill="#2a1b88"/>
<rect x="801" y="152" width="25" height="1" fill="#666866"/>
<rect x="801" y="152" width="1" height="25" fill="#666866"/>
<rect x="801" y="176" width="25" height="1" fill="#666866"/>
<rect x="825" y="152" width="1" height="25" fill="#666866"/>
<rect x="802" y="153" width="23" height="1" fill="#ffffff"/>
<rect x="802" y="153" width="1" height="23" fill="#ffffff"/>
<rect x="802" y="177" width="25" height="1" fill="#ffffff"/>
<rect x="826" y="153" width="1" height="25" fill="#ffffff"/>
<rect x="827" y="152" width="25" height="1" fill="#666866"/>
<rect x="827" y="152" width="1" height="25" fill="#666866"/>
<rect x="827" y="176" width="25" height="1" fill="#666866"/>
<rect x="851" y="152" width="1" height="25" fill="#666866"/>
<rect x="828" y="153" width="23" height="1" fill="#ffffff"/>
<rect x="828" y="153" width="1" height="23" fill="#ffffff"/>
<rect x="828" y="177" width="25" height="1" fill="#ffffff"/>
<rect x="852" y="153" width="1" height="25" fill="#ffffff"/>
<rect x="853" y="152" width="169" height="1" fill="#999b98"/>
<rect x="853" y="177" width="169" height="1" fill="#999b98"/>
<rect x="853" y="152" width="1" height="26" fill="#999b98"/>
<rect x="1021" y="152" width="1" height="26" fill="#999b98"/>
<rect x="1022" y="152" width="25" height="1" fill="#666866"/>
<rect x="1022" y="152" width="1" height="25" fill="#666866"/>
<rect x="1022" y="176" width="25" height="1" fill="#666866"/>
<rect x="1046" y="152" width="1" height="25" fill="#666866"/>
<rect x="1023" y="153" width="23" height="1" fill="#ffffff"/>
<rect x="1023" y="153" width="1" height="23" fill="#ffffff"/>
<rect x="1023" y="177" width="25" height="1" fill="#ffffff"/>
<rect x="1047" y="153" width="1" height="25" fill="#ffffff"/>
<rect x="1048" y="152" width="25" height="1" fill="#666866"/>
<rect x="1048" y="152" width="1" height="25" fill="#666866"/>
<rect x="1048" y="176" width="25" height="1" fill="#666866"/>
<rect x="1072" y="152" width="1" height="25" fill="#666866"/>
<rect x="1049" y="153" width="23" height="1" fill="#ffffff"/>
<rect x="1049" y="153" width="1" height="23" fill="#ffffff"/>
<rect x="1049" y="177" width="25" height="1" fill="#ffffff"/>
<rect x="1073" y="153" width="1" height="25" fill="#ffffff"/>
<rect shape-rendering="geometricPrecision" x="808.8" y="162" width="1.5" height="7" fill="#000"/>
<polygon shape-rendering="geometricPrecision" points="811,165.5 819,161.7 819,169.3" fill="#000000"/>
<polygon shape-rendering="geometricPrecision" points="835,165.5 843.2,161.7 843.2,169.3" fill="#000000"/>
<polygon shape-rendering="geometricPrecision" points="1039.8,165.5 1031.8,161.7 1031.8,169.3" fill="#000000"/>
<polygon shape-rendering="geometricPrecision" points="1064.4,165.5 1056,161.7 1056,169.3" fill="#000000"/>
<rect shape-rendering="geometricPrecision" x="1064.6" y="162" width="1.5" height="7" fill="#000"/>
<rect x="305" y="188" width="797" height="435" fill="#cbcdc9"/>
<rect x="304" y="187" width="798" height="1" fill="#666866"/>
<rect x="304" y="187" width="1" height="452" fill="#666866"/>
<rect x="1101" y="187" width="1" height="452" fill="#666866"/>
<rect x="1102" y="187" width="1" height="453" fill="#ffffff"/>
<rect x="305" y="188" width="796" height="1" fill="#ffffff"/>
<rect x="305" y="202" width="797" height="1" fill="#666866"/>
<rect x="305" y="188" width="1" height="14" fill="#ffffff"/>
<rect x="454" y="188" width="1" height="15" fill="#666866"/>
<rect x="455" y="189" width="1" height="13" fill="#ffffff"/>
<rect x="704" y="188" width="1" height="15" fill="#666866"/>
<rect x="705" y="189" width="1" height="13" fill="#ffffff"/>
<rect x="305" y="203" width="796" height="400" fill="#fffffd"/>
<rect x="305" y="218" width="796" height="1" fill="#9a9a9a"/>
<rect x="305" y="234" width="796" height="1" fill="#9a9a9a"/>
<rect x="305" y="250" width="796" height="1" fill="#9a9a9a"/>
<rect x="305" y="266" width="796" height="1" fill="#9a9a9a"/>
<rect x="305" y="282" width="796" height="1" fill="#9a9a9a"/>
<rect x="305" y="298" width="796" height="1" fill="#9a9a9a"/>
<rect x="305" y="314" width="796" height="1" fill="#9a9a9a"/>
<rect x="305" y="330" width="796" height="1" fill="#9a9a9a"/>
<rect x="305" y="346" width="796" height="1" fill="#9a9a9a"/>
<rect x="305" y="362" width="796" height="1" fill="#9a9a9a"/>
<rect x="305" y="378" width="796" height="1" fill="#9a9a9a"/>
<rect x="305" y="394" width="796" height="1" fill="#9a9a9a"/>
<rect x="305" y="410" width="796" height="1" fill="#9a9a9a"/>
<rect x="305" y="426" width="796" height="1" fill="#9a9a9a"/>
<rect x="305" y="442" width="796" height="1" fill="#9a9a9a"/>
<rect x="305" y="458" width="796" height="1" fill="#9a9a9a"/>
<rect x="305" y="474" width="796" height="1" fill="#9a9a9a"/>
<rect x="305" y="490" width="796" height="1" fill="#9a9a9a"/>
<rect x="305" y="506" width="796" height="1" fill="#9a9a9a"/>
<rect x="305" y="522" width="796" height="1" fill="#9a9a9a"/>
<rect x="305" y="538" width="796" height="1" fill="#9a9a9a"/>
<rect x="305" y="554" width="796" height="1" fill="#9a9a9a"/>
<rect x="305" y="570" width="796" height="1" fill="#9a9a9a"/>
<rect x="305" y="586" width="796" height="1" fill="#9a9a9a"/>
<rect x="305" y="602" width="796" height="1" fill="#9a9a9a"/>
<rect x="454" y="203" width="1" height="400" fill="#9a9a9a"/>
<rect x="704" y="203" width="1" height="400" fill="#9a9a9a"/>
<rect x="305" y="623" width="796" height="1" fill="#666866"/>
<rect x="305" y="638" width="796" height="1" fill="#666866"/>
<rect x="304" y="639" width="799" height="1" fill="#ffffff"/>
<rect x="305" y="624" width="15" height="1" fill="#ffffff"/>
<rect x="305" y="624" width="1" height="14" fill="#ffffff"/>
<rect x="1086" y="624" width="15" height="1" fill="#ffffff"/>
<rect x="320" y="623" width="1" height="16" fill="#666866"/>
<rect x="310" y="630" width="1" height="2" fill="#000000"/>
<rect x="311" y="629" width="1" height="4" fill="#000000"/>
<rect x="312" y="628" width="1" height="6" fill="#000000"/>
<rect x="313" y="627" width="1" height="8" fill="#000000"/>
<rect x="321" y="624" width="611" height="14" fill="#9999cc"/>
<rect x="320" y="623" width="1" height="16" fill="#666699"/>
<rect x="932" y="623" width="1" height="16" fill="#666699"/>
<rect x="320" y="623" width="613" height="1" fill="#666699"/>
<rect x="320" y="638" width="613" height="1" fill="#666699"/>
<rect x="321" y="624" width="611" height="1" fill="#ccccff"/>
<rect x="321" y="624" width="1" height="14" fill="#ccccff"/>
<rect x="324" y="626" width="606" height="10" fill="url(#bm)"/>
<rect x="1085" y="623" width="1" height="16" fill="#666866"/>
<rect x="1086" y="624" width="1" height="14" fill="#ffffff"/>
<rect x="1095" y="630" width="1" height="2" fill="#000000"/>
<rect x="1094" y="629" width="1" height="4" fill="#000000"/>
<rect x="1093" y="628" width="1" height="6" fill="#000000"/>
<rect x="1092" y="627" width="1" height="8" fill="#000000"/>
<rect x="0" y="654" width="378" height="17" fill="#999b98"/>
<rect x="1" y="671" width="230" height="1" fill="#666866"/>
<rect x="231" y="671" width="1" height="1" fill="#666866"/>
<rect x="232" y="670" width="1" height="1" fill="#666866"/>
<rect x="233" y="654" width="1" height="16" fill="#666866"/>
<rect x="234" y="654" width="1" height="16" fill="#ffffff"/>
<rect x="235" y="670" width="1" height="1" fill="#ffffff"/>
<rect x="236" y="671" width="1" height="1" fill="#ffffff"/>
<rect x="237" y="671" width="138" height="1" fill="#666866"/>
<rect x="375" y="671" width="1" height="1" fill="#666866"/>
<rect x="376" y="670" width="1" height="1" fill="#666866"/>
<rect x="377" y="654" width="1" height="16" fill="#666866"/>
<rect x="0" y="670" width="1" height="2" fill="#ffffff"/>
<rect x="233" y="670" width="1" height="1" fill="#cbcdc9"/>
<rect x="234" y="670" width="1" height="1" fill="#cbcdc9"/>
<rect x="4" y="658" width="16" height="1" fill="#ffffff"/>
<rect x="4" y="658" width="1" height="16" fill="#ffffff"/>
<rect x="5" y="673" width="15" height="1" fill="#b3b2a8"/>
<rect x="19" y="659" width="1" height="15" fill="#b3b2a8"/>
<g shape-rendering="geometricPrecision" stroke="#111" stroke-width="2" stroke-linecap="round"><line x1="9" y1="663" x2="15" y2="669"/><line x1="15" y1="663" x2="9" y2="669"/></g>
<rect x="11" y="665" width="2" height="2" fill="#222"/>
<rect x="239" y="658" width="16" height="1" fill="#ffffff"/>
<rect x="239" y="658" width="1" height="16" fill="#ffffff"/>
<rect x="240" y="673" width="15" height="1" fill="#b3b2a8"/>
<rect x="254" y="659" width="1" height="15" fill="#b3b2a8"/>
<g shape-rendering="geometricPrecision" stroke="#111" stroke-width="2" stroke-linecap="round"><line x1="244" y1="663" x2="250" y2="669"/><line x1="250" y1="663" x2="244" y2="669"/></g>
<rect x="246" y="665" width="2" height="2" fill="#222"/>
<rect x="378" y="653" width="78" height="20" fill="#cbcdc9"/>
<rect x="378" y="654" width="1" height="18" fill="#ffffff"/>
<rect x="379" y="672" width="1" height="1" fill="#ffffff"/>
<rect x="380" y="673" width="74" height="1" fill="#666866"/>
<rect x="454" y="672" width="1" height="1" fill="#666866"/>
<rect x="455" y="654" width="1" height="18" fill="#666866"/>
<rect x="383" y="656" width="16" height="1" fill="#ffffff"/>
<rect x="383" y="656" width="1" height="16" fill="#ffffff"/>
<rect x="384" y="671" width="15" height="1" fill="#b3b2a8"/>
<rect x="398" y="657" width="1" height="15" fill="#b3b2a8"/>
<g shape-rendering="geometricPrecision" stroke="#111" stroke-width="2" stroke-linecap="round"><line x1="388" y1="661" x2="394" y2="667"/><line x1="394" y1="661" x2="388" y2="667"/></g>
<rect x="390" y="663" width="2" height="2" fill="#222"/>
</svg>
<div class="t" style="left:375.0px;top:14px;font-size:13px;line-height:15px;letter-spacing:-0.25px;font-weight:bold;-webkit-text-stroke:0.3px #000;">Документы</div>
<div class="t" style="left:326.6px;top:14px;font-size:13px;line-height:15px;letter-spacing:-0.5px;font-weight:bold;-webkit-text-stroke:0.3px #000;">CRM</div>
<div class="t" style="left:245.4px;top:14px;font-size:13px;line-height:15px;letter-spacing:-0.09px;font-weight:bold;-webkit-text-stroke:0.3px #000;">HelpDesk</div>
<div class="t" style="left:167.0px;top:14px;font-size:13px;line-height:15px;letter-spacing:-0.28px;font-weight:bold;-webkit-text-stroke:0.3px #000;">Карточки</div>
<div class="t" style="left:109.0px;top:14px;font-size:13px;line-height:15px;letter-spacing:-0.5px;font-weight:bold;-webkit-text-stroke:0.3px #000;">Отчет</div>
<div class="t" style="left:17.5px;top:14px;font-size:13px;line-height:15px;letter-spacing:-0.5px;font-weight:bold;-webkit-text-stroke:0.3px #000;">Параметры</div>
<div class="t" style="left:24.0px;top:38px;font-size:13px;line-height:15px;letter-spacing:0.12px;font-weight:bold;-webkit-text-stroke:0.3px #000;">Договор</div>
<div class="t" style="left:874.3px;top:38px;font-size:13px;line-height:15px;letter-spacing:-0.36px;font-weight:bold;-webkit-text-stroke:0.3px #000;">Период</div>
<div class="t" style="left:22.4px;top:63px;font-size:15px;line-height:17px;letter-spacing:0.44px;">x0000 (Иванов Петр Сидорович)</div>
<div class="t" style="left:872.6px;top:63px;font-size:13px;line-height:15px;font-weight:bold;-webkit-text-stroke:0.3px #000;">с</div>
<div class="t" style="left:898.8px;top:64px;font-size:11.5px;line-height:12px;letter-spacing:0.36px;font-weight:bold;-webkit-text-stroke:0.3px #000;">01.05.2007</div>
<div class="t" style="left:981.4px;top:63px;font-size:13px;line-height:15px;letter-spacing:-0.5px;font-weight:bold;-webkit-text-stroke:0.3px #000;">по</div>
<div class="t" style="left:30.6px;top:123px;font-size:13px;line-height:15px;letter-spacing:0.1px;">Параметры договора</div>
<div class="t" style="left:31.6px;top:143px;font-size:13px;line-height:15px;letter-spacing:-0.5px;">Статус</div>
<div class="t" style="left:229.1px;top:143px;font-size:11px;line-height:12px;letter-spacing:0.4px;">активен</div>
<div class="t" style="left:30.6px;top:163px;font-size:13px;line-height:15px;letter-spacing:0.04px;">Группа тарифов</div>
<div class="t" style="left:31.6px;top:183px;font-size:13px;line-height:15px;letter-spacing:0.16px;">Скрипт поведения</div>
<div class="t" style="left:30.8px;top:203px;font-size:13px;line-height:15px;letter-spacing:-0.05px;">Лимит</div>
<div class="t" style="left:235.6px;top:203px;font-size:11.5px;line-height:12px;letter-spacing:0.76px;">-990.0</div>
<div class="t" style="left:30.6px;top:223px;font-size:13px;line-height:15px;letter-spacing:-0.11px;">Режим</div>
<div class="t" style="left:234.6px;top:223px;font-size:11px;line-height:12px;letter-spacing:0.53px;">кредит</div>
<div class="t" style="left:30.8px;top:243px;font-size:13px;line-height:15px;letter-spacing:0.02px;">Доп. действия</div>
<div class="t" style="left:32.0px;top:263px;font-size:13px;line-height:15px;letter-spacing:-0.5px;">Web</div>
<div class="t" style="left:50.4px;top:283px;font-size:13px;line-height:15px;letter-spacing:0.17px;">Пароль статистики</div>
<div class="t" style="left:50.7px;top:303px;font-size:13px;line-height:15px;letter-spacing:0.17px;">Управление лимитом</div>
<div class="t" style="left:30.6px;top:323px;font-size:13px;line-height:15px;letter-spacing:0.17px;">Группы</div>
<div class="t" style="left:50.8px;top:343px;font-size:13px;line-height:15px;">B</div>
<div class="t" style="left:50.8px;top:363px;font-size:13px;line-height:15px;">E</div>
<div class="t" style="left:50.8px;top:383px;font-size:13px;line-height:15px;">F</div>
<div class="t" style="left:50.7px;top:403px;font-size:13px;line-height:15px;letter-spacing:-0.02px;">Фиктивные</div>
<div class="t" style="left:31.2px;top:423px;font-size:13px;line-height:15px;letter-spacing:-0.01px;">Тарифные планы</div>
<div class="t" style="left:50.7px;top:443px;font-size:13px;line-height:15px;letter-spacing:-0.5px;">VOIP</div>
<div class="t" style="left:51.4px;top:463px;font-size:13px;line-height:15px;letter-spacing:-0.18px;">Тестовый</div>
<div class="t" style="left:30.6px;top:483px;font-size:13px;line-height:15px;letter-spacing:-0.14px;">Баланс (февраль 2008)</div>
<div class="t" style="left:50.8px;top:503px;font-size:13px;line-height:15px;letter-spacing:-0.05px;">Входящий остаток</div>
<div class="t" style="left:228.6px;top:503px;font-size:11.5px;line-height:12px;letter-spacing:0.73px;">-839.98</div>
<div class="t" style="left:50.8px;top:523px;font-size:13px;line-height:15px;letter-spacing:0.23px;">Приход</div>
<div class="t" style="left:241.4px;top:523px;font-size:11.5px;line-height:12px;letter-spacing:0.45px;">50.90</div>
<div class="t" style="left:50.8px;top:543px;font-size:13px;line-height:15px;letter-spacing:-0.07px;">Наработка</div>
<div class="t" style="left:248.6px;top:543px;font-size:11.5px;line-height:12px;letter-spacing:0.34px;">0.00</div>
<div class="t" style="left:50.8px;top:563px;font-size:13px;line-height:15px;letter-spacing:-0.43px;">Расход</div>
<div class="t" style="left:248.6px;top:563px;font-size:11.5px;line-height:12px;letter-spacing:0.34px;">0.00</div>
<div class="t" style="left:50.8px;top:583px;font-size:13px;line-height:15px;letter-spacing:0.01px;">Исходящий остаток</div>
<div class="t" style="left:228.6px;top:583px;font-size:11.5px;line-height:12px;letter-spacing:0.73px;">-789.08</div>
<div class="t" style="left:50.8px;top:603px;font-size:13px;line-height:15px;letter-spacing:-0.22px;">Исходящее сальдо</div>
<div class="t" style="left:228.6px;top:603px;font-size:11.5px;line-height:12px;letter-spacing:0.73px;">-789.08</div>
<div class="t" style="left:33.0px;top:624px;font-size:13px;line-height:15px;letter-spacing:-0.5px;font-weight:bold;-webkit-text-stroke:0.3px #000;">Скрытый</div>
<div class="t" style="left:411.9px;top:111px;font-size:13px;line-height:15px;letter-spacing:-0.5px;font-weight:bold;-webkit-text-stroke:0.3px #000;">Статистика</div>
<div class="t" style="left:314.4px;top:111px;font-size:13px;line-height:15px;letter-spacing:-0.2px;font-weight:bold;-webkit-text-stroke:0.3px #000;">Управление</div>
<div class="t" style="left:317.6px;top:130px;font-size:13px;line-height:15px;letter-spacing:-0.5px;font-weight:bold;-webkit-text-stroke:0.3px #000;">Режим</div>
<div class="t" style="left:645.0px;top:130px;font-size:13px;line-height:15px;letter-spacing:-0.24px;font-weight:bold;-webkit-text-stroke:0.3px #000;">Сортировка (дата)</div>
<div class="t" style="left:786.9px;top:130px;font-size:13px;line-height:15px;letter-spacing:-0.4px;font-weight:bold;-webkit-text-stroke:0.3px #000;">Страница</div>
<div class="t" style="left:354.5px;top:156px;font-size:12px;line-height:14px;letter-spacing:-0.36px;font-weight:bold;-webkit-text-stroke:0.3px #000;">Разблокировано</div>
<div class="t" style="left:492.8px;top:156px;font-size:12px;line-height:14px;letter-spacing:-0.42px;font-weight:bold;-webkit-text-stroke:0.3px #000;">Заблокировано</div>
<div class="t" style="left:905.4px;top:157px;font-size:13px;line-height:15px;letter-spacing:0.5px;">1 из 2 [25]</div>
<div class="t" style="left:366.0px;top:189px;font-size:12px;line-height:14px;letter-spacing:0.53px;">Дата</div>
<div class="t" style="left:541.0px;top:189px;font-size:12px;line-height:14px;letter-spacing:0.13px;">Пользователь</div>
<div class="t" style="left:960.0px;top:189px;font-size:12px;line-height:14px;letter-spacing:0.72px;">Новый режим</div>
<div class="t" style="left:306.4px;top:204px;font-size:11.5px;line-height:12px;letter-spacing:0.39px;">16.02.2007 18:40:09</div>
<div class="t" style="left:456.7px;top:204px;font-size:11.5px;line-height:12px;letter-spacing:0.05px;">shamil [ Шамиль ]</div>
<div class="t" style="left:706.8px;top:204px;font-size:11.5px;line-height:12px;letter-spacing:0.27px;">разблокировано</div>
<div class="t" style="left:306.4px;top:220px;font-size:11.5px;line-height:12px;letter-spacing:0.39px;">16.02.2007 18:40:08</div>
<div class="t" style="left:456.7px;top:220px;font-size:11.5px;line-height:12px;letter-spacing:0.05px;">shamil [ Шамиль ]</div>
<div class="t" style="left:706.8px;top:220px;font-size:11.5px;line-height:12px;letter-spacing:0.21px;">заблокировано</div>
<div class="t" style="left:306.4px;top:236px;font-size:11.5px;line-height:12px;letter-spacing:0.39px;">16.02.2007 13:11:55</div>
<div class="t" style="left:456.7px;top:236px;font-size:11.5px;line-height:12px;letter-spacing:0.05px;">shamil [ Шамиль ]</div>
<div class="t" style="left:706.8px;top:236px;font-size:11.5px;line-height:12px;letter-spacing:0.27px;">разблокировано</div>
<div class="t" style="left:306.4px;top:252px;font-size:11.5px;line-height:12px;letter-spacing:0.39px;">15.02.2007 12:37:33</div>
<div class="t" style="left:456.7px;top:252px;font-size:11.5px;line-height:12px;letter-spacing:0.05px;">shamil [ Шамиль ]</div>
<div class="t" style="left:706.8px;top:252px;font-size:11.5px;line-height:12px;letter-spacing:0.27px;">разблокировано</div>
<div class="t" style="left:306.4px;top:268px;font-size:11.5px;line-height:12px;letter-spacing:0.39px;">15.02.2007 12:37:30</div>
<div class="t" style="left:456.7px;top:268px;font-size:11.5px;line-height:12px;letter-spacing:0.05px;">shamil [ Шамиль ]</div>
<div class="t" style="left:706.8px;top:268px;font-size:11.5px;line-height:12px;letter-spacing:0.27px;">разблокировано</div>
<div class="t" style="left:306.4px;top:284px;font-size:11.5px;line-height:12px;letter-spacing:0.39px;">14.02.2007 17:52:19</div>
<div class="t" style="left:456.7px;top:284px;font-size:11.5px;line-height:12px;letter-spacing:0.05px;">shamil [ Шамиль ]</div>
<div class="t" style="left:706.8px;top:284px;font-size:11.5px;line-height:12px;letter-spacing:0.27px;">разблокировано</div>
<div class="t" style="left:306.4px;top:300px;font-size:11.5px;line-height:12px;letter-spacing:0.39px;">14.02.2007 17:52:00</div>
<div class="t" style="left:456.8px;top:300px;font-size:11.5px;line-height:12px;letter-spacing:-0.21px;">Сервер</div>
<div class="t" style="left:706.8px;top:300px;font-size:11.5px;line-height:12px;letter-spacing:0.21px;">заблокировано</div>
<div class="t" style="left:306.4px;top:316px;font-size:11.5px;line-height:12px;letter-spacing:0.39px;">14.02.2007 17:51:17</div>
<div class="t" style="left:456.7px;top:316px;font-size:11.5px;line-height:12px;letter-spacing:0.05px;">shamil [ Шамиль ]</div>
<div class="t" style="left:706.8px;top:316px;font-size:11.5px;line-height:12px;letter-spacing:0.27px;">разблокировано</div>
<div class="t" style="left:306.4px;top:332px;font-size:11.5px;line-height:12px;letter-spacing:0.39px;">14.02.2007 17:51:10</div>
<div class="t" style="left:456.7px;top:332px;font-size:11.5px;line-height:12px;letter-spacing:0.05px;">shamil [ Шамиль ]</div>
<div class="t" style="left:706.8px;top:332px;font-size:11.5px;line-height:12px;letter-spacing:0.21px;">заблокировано</div>
<div class="t" style="left:306.4px;top:348px;font-size:11.5px;line-height:12px;letter-spacing:0.39px;">14.02.2007 17:51:01</div>
<div class="t" style="left:456.7px;top:348px;font-size:11.5px;line-height:12px;letter-spacing:0.05px;">shamil [ Шамиль ]</div>
<div class="t" style="left:706.8px;top:348px;font-size:11.5px;line-height:12px;letter-spacing:0.27px;">разблокировано</div>
<div class="t" style="left:306.4px;top:364px;font-size:11.5px;line-height:12px;letter-spacing:0.39px;">14.02.2007 17:51:00</div>
<div class="t" style="left:456.7px;top:364px;font-size:11.5px;line-height:12px;letter-spacing:0.05px;">shamil [ Шамиль ]</div>
<div class="t" style="left:706.8px;top:364px;font-size:11.5px;line-height:12px;letter-spacing:0.27px;">разблокировано</div>
<div class="t" style="left:306.4px;top:380px;font-size:11.5px;line-height:12px;letter-spacing:0.39px;">14.02.2007 17:50:48</div>
<div class="t" style="left:456.8px;top:380px;font-size:11.5px;line-height:12px;letter-spacing:-0.21px;">Сервер</div>
<div class="t" style="left:706.8px;top:380px;font-size:11.5px;line-height:12px;letter-spacing:0.21px;">заблокировано</div>
<div class="t" style="left:306.4px;top:396px;font-size:11.5px;line-height:12px;letter-spacing:0.39px;">14.02.2007 17:47:37</div>
<div class="t" style="left:456.8px;top:396px;font-size:11.5px;line-height:12px;letter-spacing:-0.21px;">Сервер</div>
<div class="t" style="left:706.8px;top:396px;font-size:11.5px;line-height:12px;letter-spacing:0.21px;">заблокировано</div>
<div class="t" style="left:306.4px;top:412px;font-size:11.5px;line-height:12px;letter-spacing:0.39px;">14.02.2007 17:47:33</div>
<div class="t" style="left:456.7px;top:412px;font-size:11.5px;line-height:12px;letter-spacing:0.05px;">shamil [ Шамиль ]</div>
<div class="t" style="left:706.8px;top:412px;font-size:11.5px;line-height:12px;letter-spacing:0.27px;">разблокировано</div>
<div class="t" style="left:306.4px;top:428px;font-size:11.5px;line-height:12px;letter-spacing:0.39px;">14.02.2007 17:46:42</div>
<div class="t" style="left:456.8px;top:428px;font-size:11.5px;line-height:12px;letter-spacing:-0.21px;">Сервер</div>
<div class="t" style="left:706.8px;top:428px;font-size:11.5px;line-height:12px;letter-spacing:0.21px;">заблокировано</div>
<div class="t" style="left:306.4px;top:444px;font-size:11.5px;line-height:12px;letter-spacing:0.39px;">14.02.2007 17:37:05</div>
<div class="t" style="left:456.8px;top:444px;font-size:11.5px;line-height:12px;letter-spacing:-0.21px;">Сервер</div>
<div class="t" style="left:706.8px;top:444px;font-size:11.5px;line-height:12px;letter-spacing:0.21px;">заблокировано</div>
<div class="t" style="left:306.4px;top:460px;font-size:11.5px;line-height:12px;letter-spacing:0.39px;">14.02.2007 17:37:03</div>
<div class="t" style="left:456.8px;top:460px;font-size:11.5px;line-height:12px;letter-spacing:-0.21px;">Сервер</div>
<div class="t" style="left:706.8px;top:460px;font-size:11.5px;line-height:12px;letter-spacing:0.21px;">заблокировано</div>
<div class="t" style="left:306.4px;top:476px;font-size:11.5px;line-height:12px;letter-spacing:0.39px;">14.02.2007 17:36:47</div>
<div class="t" style="left:456.8px;top:476px;font-size:11.5px;line-height:12px;letter-spacing:-0.21px;">Сервер</div>
<div class="t" style="left:706.8px;top:476px;font-size:11.5px;line-height:12px;letter-spacing:0.21px;">заблокировано</div>
<div class="t" style="left:306.4px;top:492px;font-size:11.5px;line-height:12px;letter-spacing:0.39px;">14.02.2007 17:35:40</div>
<div class="t" style="left:456.8px;top:492px;font-size:11.5px;line-height:12px;letter-spacing:-0.21px;">Сервер</div>
<div class="t" style="left:706.8px;top:492px;font-size:11.5px;line-height:12px;letter-spacing:0.21px;">заблокировано</div>
<div class="t" style="left:306.4px;top:508px;font-size:11.5px;line-height:12px;letter-spacing:0.39px;">14.02.2007 17:33:23</div>
<div class="t" style="left:456.8px;top:508px;font-size:11.5px;line-height:12px;letter-spacing:-0.21px;">Сервер</div>
<div class="t" style="left:706.8px;top:508px;font-size:11.5px;line-height:12px;letter-spacing:0.21px;">заблокировано</div>
<div class="t" style="left:306.4px;top:524px;font-size:11.5px;line-height:12px;letter-spacing:0.39px;">14.02.2007 16:11:35</div>
<div class="t" style="left:456.7px;top:524px;font-size:11.5px;line-height:12px;letter-spacing:0.05px;">shamil [ Шамиль ]</div>
<div class="t" style="left:706.8px;top:524px;font-size:11.5px;line-height:12px;letter-spacing:0.27px;">разблокировано</div>
<div class="t" style="left:306.4px;top:540px;font-size:11.5px;line-height:12px;letter-spacing:0.39px;">14.02.2007 16:10:27</div>
<div class="t" style="left:456.7px;top:540px;font-size:11.5px;line-height:12px;letter-spacing:0.05px;">shamil [ Шамиль ]</div>
<div class="t" style="left:706.8px;top:540px;font-size:11.5px;line-height:12px;letter-spacing:0.21px;">заблокировано</div>
<div class="t" style="left:306.4px;top:556px;font-size:11.5px;line-height:12px;letter-spacing:0.39px;">14.02.2007 16:10:26</div>
<div class="t" style="left:456.7px;top:556px;font-size:11.5px;line-height:12px;letter-spacing:0.05px;">shamil [ Шамиль ]</div>
<div class="t" style="left:706.8px;top:556px;font-size:11.5px;line-height:12px;letter-spacing:0.27px;">разблокировано</div>
<div class="t" style="left:306.4px;top:572px;font-size:11.5px;line-height:12px;letter-spacing:0.39px;">14.02.2007 16:10:25</div>
<div class="t" style="left:456.7px;top:572px;font-size:11.5px;line-height:12px;letter-spacing:0.05px;">shamil [ Шамиль ]</div>
<div class="t" style="left:706.8px;top:572px;font-size:11.5px;line-height:12px;letter-spacing:0.21px;">заблокировано</div>
<div class="t" style="left:306.4px;top:588px;font-size:11.5px;line-height:12px;letter-spacing:0.39px;">14.02.2007 16:10:24</div>
<div class="t" style="left:456.7px;top:588px;font-size:11.5px;line-height:12px;letter-spacing:0.05px;">shamil [ Шамиль ]</div>
<div class="t" style="left:706.8px;top:588px;font-size:11.5px;line-height:12px;letter-spacing:0.27px;">разблокировано</div>
<div class="t" style="left:24.6px;top:655px;font-size:13px;line-height:15px;letter-spacing:-0.15px;font-weight:bold;-webkit-text-stroke:0.3px #000;">Редактор шаблонов договоров</div>
<div class="t" style="left:258.6px;top:655px;font-size:13px;line-height:15px;letter-spacing:-0.19px;font-weight:bold;-webkit-text-stroke:0.3px #000;">Поиск договоров</div>
<div class="t" style="left:404.3px;top:657px;font-size:14px;line-height:15px;letter-spacing:0.7px;font-weight:bold;-webkit-text-stroke:0.3px #000;font-family:'Liberation Serif',serif;">x0000</div>
</div></body></html>
